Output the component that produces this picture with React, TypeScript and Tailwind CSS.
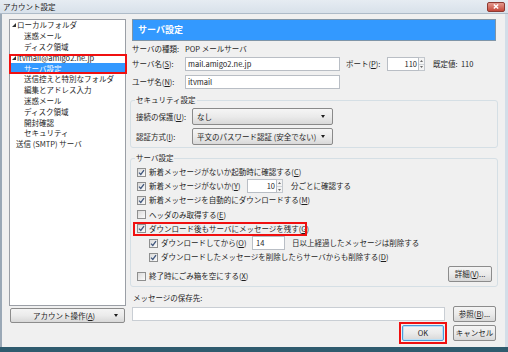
import type { ReactNode } from "react"

type TreeItem = { label: string; level: 0 | 1; arrow?: boolean; selected?: boolean }

const treeItems: TreeItem[] = [
  { label: "ローカルフォルダ", level: 0, arrow: true },
  { label: "迷惑メール", level: 1 },
  { label: "ディスク領域", level: 1 },
  { label: "itvmail@amigo2.ne.jp", level: 0, arrow: true },
  { label: "サーバ設定", level: 1, selected: true },
  { label: "送信控えと特別なフォルダ", level: 1 },
  { label: "編集とアドレス入力", level: 1 },
  { label: "迷惑メール", level: 1 },
  { label: "ディスク領域", level: 1 },
  { label: "開封確認", level: 1 },
  { label: "セキュリティ", level: 1 },
  { label: "送信 (SMTP) サーバ", level: 0 },
]

function Check({ on }: { on?: boolean }) {
  return (
    <span className="flex h-[9px] w-[9px] shrink-0 items-center justify-center border border-[#8e8f8f] bg-linear-to-br from-[#dadada] to-[#fbfbfb]">
      {on && (
        <svg width="7" height="7" viewBox="0 0 7 7">
          <path d="M1 3.6 L2.8 5.4 L6 1.2" fill="none" stroke="#40577e" strokeWidth="1.3" />
        </svg>
      )}
    </span>
  )
}

function Spinner() {
  return (
    <span className="flex h-[14px] w-[6px] shrink-0 flex-col border border-l-0 border-[#c2c7cd] bg-[#f4f4f4]">
      <span className="flex flex-1 items-center justify-center border-b border-[#d0d4d8]">
        <svg width="3" height="2" viewBox="0 0 3 2">
          <path d="M0 2 L1.5 0 L3 2 Z" fill="#6a6a6a" />
        </svg>
      </span>
      <span className="flex flex-1 items-center justify-center">
        <svg width="3" height="2" viewBox="0 0 3 2">
          <path d="M0 0 L1.5 2 L3 0 Z" fill="#6a6a6a" />
        </svg>
      </span>
    </span>
  )
}

function DownArrow() {
  return (
    <svg width="4" height="3" viewBox="0 0 4 3" className="shrink-0">
      <path d="M0 0 L4 0 L2 3 Z" fill="#1e1e1e" />
    </svg>
  )
}

function Select({ children }: { children: ReactNode }) {
  return (
    <div className="flex h-[17px] w-[141px] items-center justify-between rounded-[2px] border border-[#8a8a8a] bg-linear-to-b from-[#f5f5f5] via-[#ebebeb] to-[#d9d9d9] pl-[4px] pr-[7px]">
      <span>{children}</span>
      <DownArrow />
    </div>
  )
}

function Button({ children, w, primary }: { children: ReactNode; w: string; primary?: boolean }) {
  return (
    <div
      className={`flex h-[16px] items-center justify-center rounded-[2px] border bg-linear-to-b from-[#f4f4f4] via-[#ebebeb] to-[#d8d8d8] ${w} ${
        primary ? "border-[#4d9bd6] shadow-[inset_0_0_0_1px_#b9e0f8]" : "border-[#8c8c8c]"
      }`}
    >
      {children}
    </div>
  )
}

function Row({ on, indent, children }: { on?: boolean; indent?: boolean; children: ReactNode }) {
  return (
    <div className={`flex h-[14.2px] items-center gap-[3px] ${indent ? "ml-[12px]" : ""}`}>
      <Check on={on} />
      {children}
    </div>
  )
}

export default function App() {
  return (
    <div className="flex h-[352px] w-[508px] flex-col overflow-hidden bg-[#f0f0f0] font-['Noto_Sans_CJK_JP','Noto_Sans',sans-serif] text-[7.5px] leading-[10px] text-[#1e1e1e]">
      {/* Title bar */}
      <div className="flex h-[14px] shrink-0 items-center justify-between border-b border-[#aebbc8] bg-linear-to-b from-[#e6ecf2] to-[#d8e1ea] pl-[3px] pr-[3px]">
        <span>アカウント設定</span>
        <div className="flex h-[10px] w-[18px] items-center justify-center rounded-[2px] border border-[#8d3a32] bg-linear-to-b from-[#e3998f] to-[#c4473a]">
          <svg width="6" height="5" viewBox="0 0 6 5">
            <path d="M0.8 0.5 L5.2 4.5 M5.2 0.5 L0.8 4.5" stroke="#ffffff" strokeWidth="1.4" />
          </svg>
        </div>
      </div>

      {/* Body */}
      <div className="flex h-[333px] shrink-0 border-l-2 border-r-[3px] border-l-[#9aa8b6] border-r-[#d3dee8] pt-[5px]">
        {/* Left column */}
        <div className="ml-[7px] flex w-[117px] flex-col">
          <div className="relative h-[287px] border border-[#9b9fa6] bg-white">
            {treeItems.map((item, i) => (
              <div
                key={i}
                className={`flex h-[10.8px] items-center ${item.selected ? "bg-[#3399ff] text-white" : ""} ${
                  item.level === 1 ? "pl-[14px]" : item.arrow ? "pl-[2px]" : "pl-[6px]"
                }`}
              >
                {item.arrow && (
                  <svg width="4" height="4" viewBox="0 0 4 4" className="mr-[1px] shrink-0">
                    <path d="M4 0 L4 4 L0 4 Z" fill="#303030" />
                  </svg>
                )}
                <span className="whitespace-nowrap">{item.label}</span>
              </div>
            ))}
            <div className="absolute left-[-1px] top-[34px] h-[20px] w-[118px] border-2 border-[#f01010]" />
          </div>
          <div className="mx-[1px] mt-[2px] flex h-[15px] items-center rounded-[2px] border border-[#8c8c8c] bg-linear-to-b from-[#f4f4f4] via-[#ebebeb] to-[#d8d8d8] pl-[22px] pr-[6px]">
            <span className="flex-1">
              アカウント操作(<u>A</u>)
            </span>
            <DownArrow />
          </div>
        </div>

        {/* Right column */}
        <div className="ml-[4px] flex w-[368px] flex-col">
          <div className="mx-[2px] flex h-[22px] items-center border border-[#7f95a8] bg-[#3399ff] pl-[5px] text-[9px] font-bold text-white">
            サーバ設定
          </div>

          <div className="mt-[2px] flex h-[12px] items-center pl-[2px]">
            <span className="w-[53px]">サーバの種類:</span>
            <span>POP メールサーバ</span>
          </div>

          <div className="mt-[2px] flex h-[14px] items-center pl-[2px]">
            <span className="w-[53px]">
              サーバ名(<u>S</u>):
            </span>
            <div className="flex h-[14px] w-[155px] items-center border border-[#b9bec5] bg-white pl-[2px]">mail.amigo2.ne.jp</div>
            <span className="ml-[6px] w-[41px]">
              ポート(<u>P</u>):
            </span>
            <div className="flex h-[14px] w-[32px] items-center justify-end border border-[#b9bec5] bg-white pr-[1px]">110</div>
            <Spinner />
            <span className="ml-[8px]">既定値:&nbsp;&nbsp;110</span>
          </div>

          <div className="mt-[4px] flex h-[14px] items-center pl-[2px]">
            <span className="w-[53px]">
              ユーザ名(<u>N</u>):
            </span>
            <div className="flex h-[14px] w-[155px] items-center border border-[#b9bec5] bg-white pl-[2px]">itvmail</div>
          </div>

          {/* Security group */}
          <fieldset className="mt-[6px] rounded-[3px] border border-[#d5dfe5] pb-[2px] pl-[5px]">
            <legend className="-ml-[1px] px-[1px] leading-[10px]">セキュリティ設定</legend>
            <div className="mt-[3px] flex h-[17px] items-center">
              <span className="w-[56px]">
                接続の保護(<u>U</u>):
              </span>
              <Select>なし</Select>
            </div>
            <div className="mt-[3px] flex h-[17px] items-center">
              <span className="w-[56px]">
                認証方式(<u>I</u>):
              </span>
              <Select>平文のパスワード認証 (安全でない)</Select>
            </div>
          </fieldset>

          {/* Server settings group */}
          <fieldset className="mt-[5px] rounded-[3px] border border-[#d5dfe5] pb-[3px] pl-[6px] pr-[5px]">
            <legend className="-ml-[2px] px-[1px] leading-[10px]">サーバ設定</legend>
            <div className="mt-[2px]">
              <Row on>
                <span>
                  新着メッセージがないか起動時に確認する(<u>C</u>)
                </span>
              </Row>
              <Row on>
                <span className="w-[95px]">
                  新着メッセージがないか(<u>Y</u>)
                </span>
                <div className="flex">
                  <div className="flex h-[14px] w-[30px] items-center justify-end border border-[#b9bec5] bg-white pr-[1px]">10</div>
                  <Spinner />
                </div>
                <span className="ml-[5px]">分ごとに確認する</span>
              </Row>
              <Row on>
                <span>
                  新着メッセージを自動的にダウンロードする(<u>M</u>)
                </span>
              </Row>
              <Row>
                <span>
                  ヘッダのみ取得する(<u>E</u>)
                </span>
              </Row>
              <div className="relative">
                <Row on>
                  <span>
                    ダウンロード後もサーバにメッセージを残す(<u>G</u>)
                  </span>
                </Row>
                <div className="absolute left-[-4px] top-0 h-[14px] w-[174px] border-2 border-[#f01010]" />
              </div>
              <Row on indent>
                <span className="w-[88px]">
                  ダウンロードしてから(<u>O</u>)
                </span>
                <div className="flex h-[14px] w-[33px] items-center border border-[#b9bec5] bg-white pl-[3px]">14</div>
                <span className="ml-[4px]">日以上経過したメッセージは削除する</span>
              </Row>
              <Row on indent>
                <span>
                  ダウンロードしたメッセージを削除したらサーバからも削除する(<u>D</u>)
                </span>
              </Row>
              <div className="mt-[2px] flex items-start justify-between">
                <div className="mt-[3px] flex h-[14px] items-center gap-[3px]">
                  <Check />
                  <span>
                    終了時にごみ箱を空にする(<u>X</u>)
                  </span>
                </div>
                <Button w="w-[44px]">
                  詳細(<u>V</u>)...
                </Button>
              </div>
            </div>
          </fieldset>

          <div className="mt-[6px] flex h-[10px] items-center pl-[3px]">メッセージの保存先:</div>

          <div className="mt-[3px] flex h-[16px] items-center">
            <div className="ml-[2px] h-[14px] w-[313px] border border-[#c9ced4] bg-white" />
            <div className="ml-[8px]">
              <Button w="w-[43px]">
                参照(<u>B</u>)...
              </Button>
            </div>
          </div>

          <div className="mt-[3px] flex h-[16px] items-center justify-end gap-[9px] pr-[2px]">
            <div className="relative">
              <Button w="w-[42px]" primary>
                OK
              </Button>
              <div className="absolute -inset-[3px] border-2 border-[#f01010]" />
            </div>
            <Button w="w-[43px]">キャンセル</Button>
          </div>
        </div>
      </div>

      {/* Bottom edge */}
      <div className="h-[5px] shrink-0 bg-[#2f5b6e]" />
    </div>
  )
}
